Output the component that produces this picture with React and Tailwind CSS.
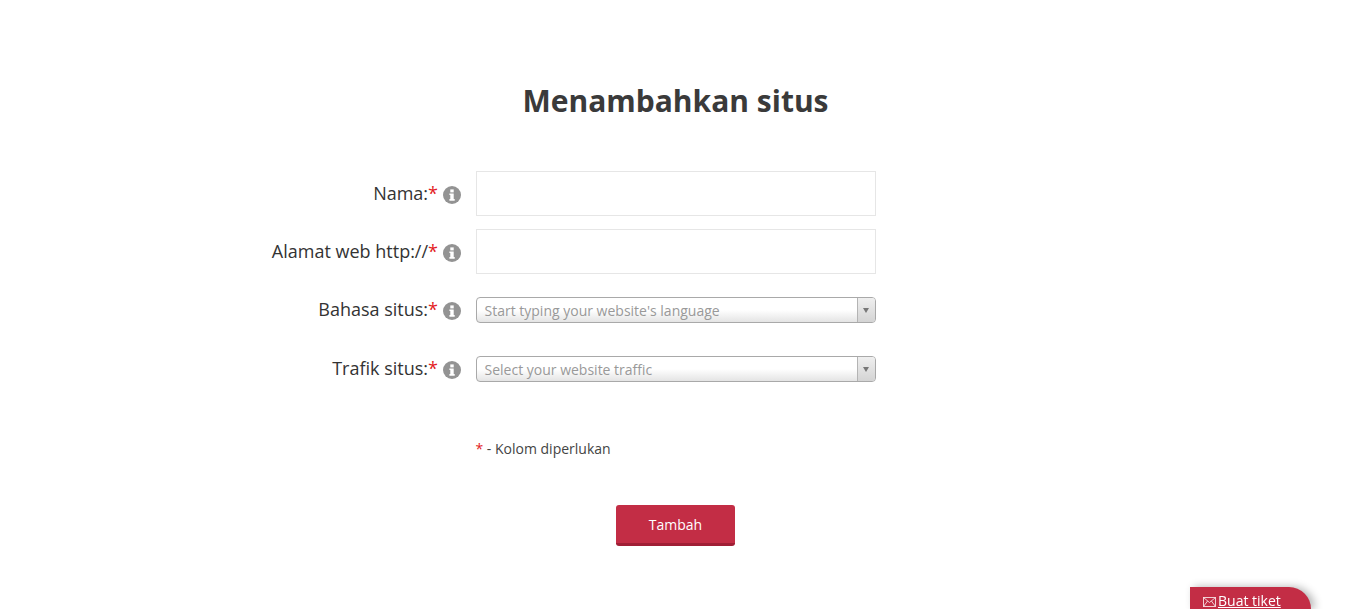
function Info() {
  return (
    <span className="flex h-[18px] w-[18px] shrink-0 items-center justify-center rounded-full bg-[#939393]">
      <svg width="18" height="18" viewBox="0 0 18 18">
        <rect x="7.3" y="3.4" width="3.4" height="3" fill="#fff" />
        <path d="M6.4 7.4h4.3v5.6h1v1.7H6.4V13h.9V9.1h-.9z" fill="#fff" />
      </svg>
    </span>
  );
}

function Label({ text, className }) {
  return (
    <div className={`flex w-[461px] shrink-0 justify-end ${className}`}>
      <span className="text-[18px] leading-[24px] text-[#333]">
        {text}
        <span className="text-[#e31b23]">*</span>
      </span>
      <span className="ml-[5px] mt-[5px]"><Info /></span>
    </div>
  );
}

function TextRow({ text, className }) {
  return (
    <div className={`flex ${className}`}>
      <Label text={text} className="pt-[10px]" />
      <input className="ml-[15px] h-[45px] w-[400px] border border-[#e6e6e6] bg-white" />
    </div>
  );
}

function SelectRow({ text, placeholder, className }) {
  return (
    <div className={`flex ${className}`}>
      <Label text={text} />
      <div className="ml-[15px] flex h-[26px] w-[400px] overflow-hidden rounded-[4px] border border-[#a9a9a9] bg-gradient-to-b from-white from-50% to-[#e4e4e4]">
        <span className="flex-1 pl-[7.5px] text-[14px] leading-[26px] text-[#999]">{placeholder}</span>
        <span className="flex w-[18.5px] items-center justify-center border-l border-[#b4b4b4] bg-gradient-to-b from-[#efefef] to-[#d4d4d4]">
          <svg width="6" height="5" viewBox="0 0 6 5"><path d="M0 0h6L3 5z" fill="#777" /></svg>
        </span>
      </div>
    </div>
  );
}

export default function App() {
  return (
    <div className="relative h-[609px] overflow-hidden bg-white font-['Open_Sans',sans-serif]">
      <h1 className="pt-[80px] pl-[3px] text-center text-[30px] font-bold leading-[41px] text-[#3a3a3a]">
        Menambahkan situs
      </h1>
      <TextRow text="Nama:" className="mt-[50px]" />
      <TextRow text="Alamat web http://" className="mt-[13px]" />
      <SelectRow text="Bahasa situs:" placeholder="Start typing your website's language" className="mt-[23px]" />
      <SelectRow text="Trafik situs:" placeholder="Select your website traffic" className="mt-[33px]" />
      <p className="ml-[475.5px] mt-[55px] text-[14px] leading-[24px] text-[#444]">
        <span className="text-[#e31b23]">*</span> - Kolom diperlukan
      </p>
      <div className="mt-[44px] flex justify-center pl-[3px]">
        <button className="h-[41px] w-[119px] rounded-[3px] border-b-[3px] border-[#a01f35] bg-[#c32d45] text-[14px] font-normal text-white">
          Tambah
        </button>
      </div>
      <div className="fixed bottom-0 left-[1190px] flex h-[22px] w-[121px] items-start rounded-tr-[30px] bg-[#c32d45] pl-[13px] pt-[4px] shadow-[4px_0_8px_rgba(0,0,0,0.3)]">
        <svg className="mr-[2px] mt-[6px]" width="13" height="10" viewBox="0 0 13 10" fill="none" stroke="#f6dfe3" strokeWidth="0.9">
          <rect x="0.5" y="0.5" width="12" height="9" />
          <path d="M0.5 0.5L6.5 5.5L12.5 0.5M0.5 9.5L4.6 4M12.5 9.5L8.4 4" />
        </svg>
        <a className="text-[14px] font-medium leading-[19px] text-white underline">Buat tiket</a>
      </div>
    </div>
  );
}
